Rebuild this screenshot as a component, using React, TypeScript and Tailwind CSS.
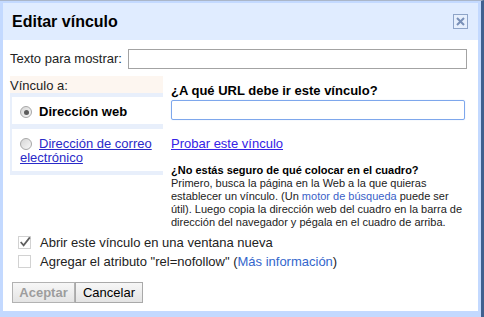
import React from 'react'

function Radio({ checked }: { checked?: boolean }) {
  return (
    <span className="relative mr-[7px] inline-block h-[12px] w-[12px] translate-y-[1px] rounded-full border border-[#a7a7a7] bg-gradient-to-br from-[#d6d6d6] to-[#f8f8f8] align-[-1px]">
      {checked && (
        <span className="absolute left-[2.5px] top-[2.5px] h-[5px] w-[5px] rounded-full bg-[#5c5c5c]" />
      )}
    </span>
  )
}

function Checkbox({ checked }: { checked?: boolean }) {
  return (
    <span className="relative inline-block h-[13px] w-[13px] shrink-0 border border-[#d2d2d2] bg-white">
      {checked && (
        <svg viewBox="0 0 13 13" className="absolute -left-[1px] -top-[2px] h-[14px] w-[14px]">
          <path d="M2.5 6.5 L5.2 9.6 L11 2.2" fill="none" stroke="#5f5f5f" strokeWidth="1.6" />
        </svg>
      )}
    </span>
  )
}

export default function App() {
  return (
    <div className="h-[317px] w-[484px] border-t border-r-[3px] border-t-[#aab6c9] border-r-[#40608f] bg-[#c3d9ff] pb-[6px] pl-[3px] pr-[3px] pt-[2px] font-['Liberation_Sans',Arial,sans-serif] text-[#222]">
      <div className="flex h-full flex-col bg-white">
        <div className="flex h-[37px] shrink-0 items-center justify-between bg-[#e0ecff] pl-[9px] pr-[10px]">
          <h1 className="text-[16px] font-bold text-black">Editar vínculo</h1>
          <button className="flex h-[15px] w-[15px] items-center justify-center border border-[#8ea4c8] bg-[#e6effd]">
            <svg viewBox="0 0 11 11" className="h-[11px] w-[11px]">
              <path d="M2 2 L9 9 M9 2 L2 9" stroke="#7990b8" strokeWidth="2" />
            </svg>
          </button>
        </div>

        <div className="flex flex-1 flex-col pl-[7px] pr-[11px]">
          <div className="mt-[9px] flex h-[20px] items-center">
            <span className="text-[13px]">Texto para mostrar:</span>
            <input className="ml-[6px] h-[20px] flex-1 border border-[#a3a3a3] outline-none" />
          </div>

          <div className="mt-[7px] flex">
            <div className="w-[153px] shrink-0">
              <div className="h-[17px] bg-[#fdf6f0] text-[13px] leading-[19px]">Vínculo a:</div>
              <div className="bg-[#e8effb] py-[4px] pl-[2px]">
                <div className="bg-white pb-[5px] pl-[8px] pt-[8px] text-[13px] font-bold leading-[14px] text-black">
                  <Radio checked />
                  Dirección web
                </div>
                <div className="mt-[5px] bg-white pb-[6px] pl-[8px] pr-[6px] pt-[8px] text-[13px] leading-[14px]">
                  <Radio />
                  <a href="#" className="text-[#2a2ac8] underline">
                    Dirección de correo electrónico
                  </a>
                </div>
              </div>
            </div>

            <div className="ml-[8px] w-[296px] pt-[7px]">
              <div className="text-[13px] font-bold leading-[15px] text-black">¿A qué URL debe ir este vínculo?</div>
              <input className="mt-[1px] h-[20px] w-[294px] rounded-[2px] border border-[#7ea7ec] shadow-[0_0_1px_#aac6f5] outline-none" />
              <a href="#" className="mt-[14px] block text-[13px] leading-[15px] text-[#3523e6] underline">
                Probar este vínculo
              </a>
              <div className="mt-[13px] text-[11px] leading-[13px] text-[#222]">
                <div className="font-bold text-black">¿No estás seguro de qué colocar en el cuadro?</div>
                Primero, busca la página en la Web a la que quieras establecer un vínculo. (Un{' '}
                <a href="#" className="text-[#3a5fc8]">motor de búsqueda</a> puede ser útil). Luego copia la
                dirección web del cuadro en la barra de dirección del navegador y pégala en el cuadro de arriba.
              </div>
            </div>
          </div>

          <div className="mt-[7px] flex flex-col gap-[6px] pl-[8px] text-[13px] leading-[13px]">
            <label className="flex items-center gap-[9px]">
              <Checkbox checked />
              Abrir este vínculo en una ventana nueva
            </label>
            <label className="flex items-center gap-[9px]">
              <Checkbox />
              <span>
                Agregar el atributo "rel=nofollow" (<a href="#" className="text-[#3366cc]">Más información</a>)
              </span>
            </label>
          </div>

          <div className="ml-[2px] mt-[14px] flex">
            <button className="h-[21px] w-[63px] border border-[#b2b2b2] bg-gradient-to-b from-[#f7f7f7] to-[#e4e4e4] text-[13px] font-bold text-[#9d9d9d]">
              Aceptar
            </button>
            <button className="h-[21px] w-[68px] border border-[#a9a9a9] bg-gradient-to-b from-[#f7f7f7] to-[#e4e4e4] text-[13px] text-black">
              Cancelar
            </button>
          </div>
        </div>
      </div>
    </div>
  )
}
